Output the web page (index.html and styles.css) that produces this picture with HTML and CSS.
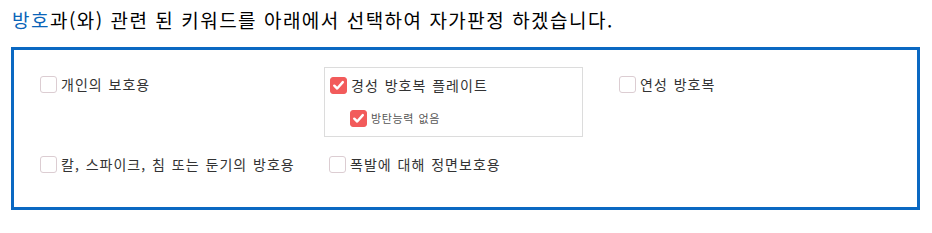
FILE: index.html
```html
<!DOCTYPE html>
<html lang="ko">
<head>
<meta charset="utf-8">
<link rel="stylesheet" href="styles.css">
</head>
<body>
<h1 class="title"><span class="hl">방호</span>과(와) 관련 된 키워드를 아래에서 선택하여 자가판정 하겠습니다.</h1>
<div class="panel">
  <div class="grid">
    <div class="cell"><label class="item"><span class="cb"></span>개인의 보호용</label></div>
    <div class="group">
      <label class="item"><span class="cb on"><svg viewBox="0 0 16 16"><path d="M3.5 8.2 L6.6 11.2 L12.6 4.4" /></svg></span>경성 방호복 플레이트</label>
      <label class="item sub"><span class="cb on small"><svg viewBox="0 0 16 16"><path d="M3.5 8.2 L6.6 11.2 L12.6 4.4" /></svg></span>방탄능력 없음</label>
    </div>
    <div class="cell"><label class="item"><span class="cb"></span>연성 방호복</label></div>
    <div class="cell row2"><label class="item"><span class="cb"></span>칼, 스파이크, 침 또는 둔기의 방호용</label></div>
    <div class="cell row2 c2"><label class="item"><span class="cb"></span>폭발에 대해 정면보호용</label></div>
  </div>
</div>
</body>
</html>
```
FILE: styles.css
```css
html, body {
  margin: 0;
  padding: 0;
  background: #fff;
}
body {
  font-family: "Noto Sans CJK KR", "Noto Sans", sans-serif;
  color: #333;
}
.title {
  margin: 0;
  padding: 8px 0 0 12px;
  height: 39px;
  box-sizing: border-box;
  font-size: 19px;
  font-weight: normal;
  line-height: 24px;
  color: #000;
  letter-spacing: 1.5px;
}
.hl {
  color: #0a64b8;
}
.panel {
  margin-left: 11px;
  margin-top: 8px;
  width: 909px;
  height: 163px;
  box-sizing: border-box;
  border: 3px solid #0a68c2;
  padding: 17px 0 0 26px;
}
.grid {
  display: grid;
  grid-template-columns: 284px 295px auto;
  row-gap: 17px;
  align-items: start;
}
.cell {
  padding-top: 8px;
}
.c2 {
  padding-left: 5px;
}
.row2 {
  padding-top: 1px;
}
.item {
  display: flex;
  align-items: center;
  height: 18px;
  font-size: 14px;
  line-height: 18px;
  color: #333;
  letter-spacing: 1px;
  word-spacing: 1px;
}
.cb {
  width: 15px;
  height: 15px;
  border: 1px solid #dccdd2;
  border-radius: 3px;
  margin-right: 4px;
  flex: none;
  background: #fff;
  display: flex;
}
.cb.on {
  background: #f25b5b;
  border-color: #f25b5b;
}
.cb svg {
  width: 15px;
  height: 15px;
}
.cb path {
  fill: none;
  stroke: #fff;
  stroke-width: 2.6;
  stroke-linecap: round;
  stroke-linejoin: round;
}
.group {
  width: 259px;
  height: 70px;
  box-sizing: border-box;
  border: 1px solid #dcdcdc;
  padding: 8px 0 0 5px;
  display: flex;
  flex-direction: column;
  gap: 15px;
}
.sub {
  padding-left: 20px;
  font-size: 11px;
  color: #555;
  letter-spacing: 0.6px;
}
.small {
  width: 15px;
  height: 15px;
}
```
